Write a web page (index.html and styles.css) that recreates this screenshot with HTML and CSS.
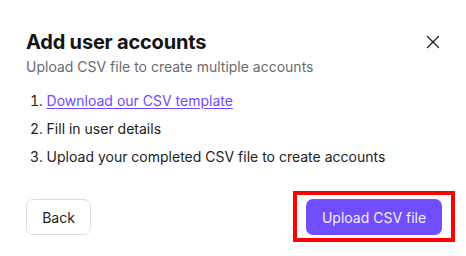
FILE: index.html
```html
<!DOCTYPE html>
<html>
<head>
<meta charset="utf-8">
<link rel="stylesheet" href="styles.css">
</head>
<body>
<div class="dialog">
  <div class="header">
    <div class="titles">
      <h1 class="title">Add user accounts</h1>
      <p class="subtitle">Upload CSV file to create multiple accounts</p>
    </div>
    <button class="close" aria-label="Close">
      <svg width="14" height="14" viewBox="0 0 14 14"><path d="M1.5 1.5L12.5 12.5M12.5 1.5L1.5 12.5" stroke="#1f1f1f" stroke-width="1.3" fill="none" stroke-linecap="round"/></svg>
    </button>
  </div>
  <ol class="steps">
    <li><a href="#" class="link">Download our CSV template</a></li>
    <li>Fill in user details</li>
    <li>Upload your completed CSV file to create accounts</li>
  </ol>
  <div class="footer">
    <button class="btn btn-secondary">Back</button>
    <div class="highlight">
      <button class="btn btn-primary">Upload CSV file</button>
    </div>
  </div>
</div>
</body>
</html>
```
FILE: styles.css
```css
html, body {
  margin: 0;
  padding: 0;
  background: #ffffff;
}
body {
  font-family: Inter, "Noto Sans", sans-serif;
  color: #1f1f1f;
  min-height: 256px;
}
.dialog {
  padding: 28px 24px 21px 26px;
}
.header {
  display: flex;
  justify-content: space-between;
  align-items: flex-start;
}
.title {
  margin: 0;
  font-size: 20px;
  line-height: 28px;
  font-weight: 700;
  color: #141414;
  letter-spacing: -0.2px;
}
.subtitle {
  margin: 1px 0 0;
  font-size: 14px;
  line-height: 20px;
  color: #6b6b6b;
}
.close {
  margin-top: 7px;
  margin-right: 2px;
  padding: 0;
  border: 0;
  background: none;
  width: 14px;
  height: 14px;
  display: flex;
}
.steps {
  margin: 14px 0 0;
  padding: 0 0 0 4px;
  list-style-position: inside;
  display: flex;
  flex-direction: column;
  gap: 8px;
  font-size: 14px;
  line-height: 20px;
  color: #222222;
}
.link {
  color: #6e4bff;
  text-decoration: underline;
  text-underline-offset: 2px;
}
.footer {
  margin-top: 32px;
  display: flex;
  justify-content: space-between;
  align-items: center;
}
.btn {
  font-family: Inter, "Noto Sans", sans-serif;
  font-size: 14px;
  height: 36px;
  border-radius: 7px;
  cursor: pointer;
}
.btn-secondary {
  width: 65px;
  background: #ffffff;
  border: 1px solid #dedede;
  color: #1f1f1f;
}
.btn-primary {
  width: 136px;
  background: #704dff;
  border: 0;
  color: #f3efff;
}
.highlight {
  position: relative;
  display: flex;
}
.highlight::after {
  content: "";
  position: absolute;
  top: -8px;
  bottom: -7px;
  left: -13px;
  right: -13px;
  border: 4px solid #ff0000;
  pointer-events: none;
}
```
